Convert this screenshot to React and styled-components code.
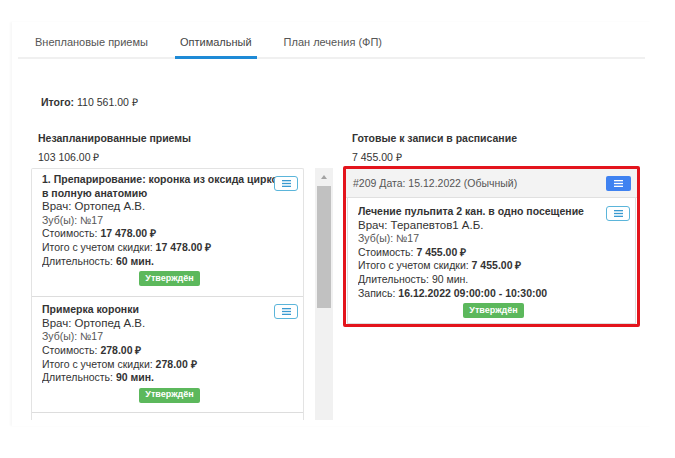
import React from "react";
import styled, { createGlobalStyle } from "styled-components";

const GlobalStyle = createGlobalStyle`
  html, body { margin: 0; padding: 0; background: #fff; }
  body { font-family: "Liberation Sans", Arial, sans-serif; color: #333; }
  * { box-sizing: border-box; }
`;

const Page = styled.div`
  width: 675px;
  height: 458px;
  padding: 22px 0 0 12px;
  overflow: hidden;
`;

const Panel = styled.div`
  width: 640px;
  height: 404px;
  background: #fff;
  box-shadow: -2px 0 2px rgba(0, 0, 0, 0.03);
  padding-top: 4px;
`;

const TabBar = styled.div`
  display: flex;
  gap: 22px;
  margin-left: 6px;
  width: 627px;
  padding-left: 12px;
  border-bottom: 2px solid #f0f0f0;
`;

const Tab = styled.div`
  font-size: 11px;
  color: ${(p) => (p.$active ? "#444" : "#555")};
  padding: 10px 5px 8px;
  margin-bottom: -2px;
  border-bottom: 3px solid ${(p) => (p.$active ? "#1e8ad6" : "transparent")};
  white-space: nowrap;
`;

const Total = styled.div`
  font-size: 10.5px;
  margin: 36px 0 0 29px;
  line-height: 14px;
  b { font-weight: bold; }
`;

const Columns = styled.div`
  display: grid;
  grid-template-columns: 302px 297px;
  column-gap: 10px;
  margin: 22px 0 0 19px;
`;

const Column = styled.div`
  display: flex;
  flex-direction: column;
`;

const ColTitle = styled.div`
  font-size: 10.5px;
  font-weight: bold;
  padding-left: ${(p) => p.$pad}px;
  line-height: 14px;
`;

const ColSum = styled.div`
  font-size: 10.5px;
  padding-left: ${(p) => p.$pad}px;
  line-height: 14px;
  margin-top: 5px;
  margin-bottom: ${(p) => p.$mb}px;
`;

const ScrollArea = styled.div`
  display: flex;
  gap: 11px;
  height: 252px;
`;

const List = styled.div`
  width: 273px;
  height: 252px;
  overflow: hidden;
  border: 1px solid #e3e3e3;
  border-bottom: none;
  border-radius: 2px 2px 0 0;
`;

const Card = styled.div`
  position: relative;
  min-height: ${(p) => p.$minH || 0}px;
  padding: ${(p) => (p.$first ? "4px 6px 10px 10px" : "6px 6px 9px 10px")};
  border-bottom: ${(p) => (p.$noBorder ? "none" : "1px solid #ddd")};
  font-size: 10.5px;
  line-height: 13.6px;
  overflow: hidden;
`;

const Line = styled.div`
  white-space: nowrap;
  overflow: hidden;
  font-size: ${(p) => p.$size || 10.5}px;
  font-weight: ${(p) => (p.$bold ? "bold" : "normal")};
  color: ${(p) => p.$color || "#333"};
  b { font-weight: bold; }
`;

const MenuButton = styled.div`
  position: absolute;
  top: ${(p) => p.$top}px;
  right: ${(p) => p.$right}px;
  width: 24px;
  height: 15px;
  border: 1.5px solid #5bb5da;
  border-radius: 3px;
  background: #fff;
  display: flex;
  align-items: center;
  justify-content: center;
`;

const SolidMenu = styled.div`
  width: 25px;
  height: 15px;
  border-radius: 2px;
  background: #3f82f1;
  display: flex;
  align-items: center;
  justify-content: center;
`;

const Approved = styled.div`
  margin: 3px auto 0;
  width: 61px;
  height: 15px;
  background: #5cb85c;
  color: #fff;
  font-size: 9px;
  font-weight: bold;
  border-radius: 2px;
  display: flex;
  align-items: center;
  justify-content: center;
`;

const Scrollbar = styled.div`
  width: 18px;
  height: 252px;
  background: #f1f1f1;
  display: flex;
  flex-direction: column;
  align-items: center;
`;

const ScrollArrow = styled.div`
  margin-top: 7px;
  width: 0;
  height: 0;
  border-left: 3.5px solid transparent;
  border-right: 3.5px solid transparent;
  border-bottom: 4px solid #a3a3a3;
`;

const ScrollThumb = styled.div`
  margin-top: 7px;
  width: 14px;
  height: 122px;
  background: #c1c1c1;
`;

const RedFrame = styled.div`
  border: 3px solid #e3141c;
  border-radius: 2px;
  width: 297px;
`;

const GroupHeader = styled.div`
  display: flex;
  align-items: center;
  justify-content: space-between;
  height: 29px;
  padding: 0 6px 0 7px;
  background: #f3f3f3;
  border-bottom: 1px solid #e0e0e0;
  font-size: 10.5px;
  color: #555;
`;

const InnerCard = styled.div`
  position: relative;
  margin: 0 1px;
  border: 1px solid #ddd;
  border-top: none;
  padding: 7px 6px 5px 10px;
  font-size: 10.5px;
  line-height: 13.6px;
  display: flex;
  flex-direction: column;
`;

const CardBody = styled.div`
  display: flex;
  flex-direction: column;
`;

const Bars = ({ color }) => (
  <svg width="9" height="7" viewBox="0 0 9 7">
    <rect x="0" y="0" width="9" height="1.3" fill={color} />
    <rect x="0" y="2.85" width="9" height="1.3" fill={color} />
    <rect x="0" y="5.7" width="9" height="1.3" fill={color} />
  </svg>
);

export default function App() {
  return (
    <>
      <GlobalStyle />
      <Page>
        <Panel>
          <TabBar>
            <Tab>Внеплановые приемы</Tab>
            <Tab $active>Оптимальный</Tab>
            <Tab>План лечения (ФП)</Tab>
          </TabBar>
          <Total>
            <b>Итого:</b> 110 561.00 ₽
          </Total>
          <Columns>
            <Column>
              <ColTitle $pad={7}>Незапланированные приемы</ColTitle>
              <ColSum $pad={7} $mb={4}>103 106.00 ₽</ColSum>
              <ScrollArea>
                <List>
                  <Card $first>
                    <CardBody>
                      <Line $bold>1. Препарирование: коронка из оксида циркония</Line>
                      <Line $bold>в полную анатомию</Line>
                      <Line $size={11.5}>Врач: Ортопед А.В.</Line>
                      <Line $color="#555">Зуб(ы): №17</Line>
                      <Line>Стоимость: <b>17 478.00 ₽</b></Line>
                      <Line>Итого с учетом скидки: <b>17 478.00 ₽</b></Line>
                      <Line>Длительность: <b>60 мин.</b></Line>
                      <Approved>Утверждён</Approved>
                    </CardBody>
                    <MenuButton $top={7} $right={5}>
                      <Bars color="#3a9ad0" />
                    </MenuButton>
                  </Card>
                  <Card>
                    <CardBody>
                      <Line $bold>Примерка коронки</Line>
                      <Line $size={11.5}>Врач: Ортопед А.В.</Line>
                      <Line $color="#555">Зуб(ы): №17</Line>
                      <Line>Стоимость: <b>278.00 ₽</b></Line>
                      <Line>Итого с учетом скидки: <b>278.00 ₽</b></Line>
                      <Line>Длительность: <b>90 мин.</b></Line>
                      <Approved>Утверждён</Approved>
                    </CardBody>
                    <MenuButton $top={7} $right={5}>
                      <Bars color="#3a9ad0" />
                    </MenuButton>
                  </Card>
                  <Card $noBorder $minH={40}>
                    <MenuButton $top={7} $right={5}>
                      <Bars color="#3a9ad0" />
                    </MenuButton>
                  </Card>
                </List>
                <Scrollbar>
                  <ScrollArrow />
                  <ScrollThumb />
                </Scrollbar>
              </ScrollArea>
            </Column>
            <Column>
              <ColTitle $pad={9}>Готовые к записи в расписание</ColTitle>
              <ColSum $pad={9} $mb={2}>7 455.00 ₽</ColSum>
              <RedFrame>
                <GroupHeader>
                  <span>#209 Дата: 15.12.2022 (Обычный)</span>
                  <SolidMenu>
                    <Bars color="#fff" />
                  </SolidMenu>
                </GroupHeader>
                <InnerCard>
                  <Line $bold>Лечение пульпита 2 кан. в одно посещение</Line>
                  <Line $size={11.5}>Врач: Терапевтов1 А.Б.</Line>
                  <Line $color="#555">Зуб(ы): №17</Line>
                  <Line>Стоимость: <b>7 455.00 ₽</b></Line>
                  <Line>Итого с учетом скидки: <b>7 455.00 ₽</b></Line>
                  <Line>Длительность: 90 мин.</Line>
                  <Line>Запись: <b>16.12.2022 09:00:00 - 10:30:00</b></Line>
                  <Approved>Утверждён</Approved>
                  <MenuButton $top={8} $right={5}>
                    <Bars color="#3a9ad0" />
                  </MenuButton>
                </InnerCard>
              </RedFrame>
            </Column>
          </Columns>
        </Panel>
      </Page>
    </>
  );
}
